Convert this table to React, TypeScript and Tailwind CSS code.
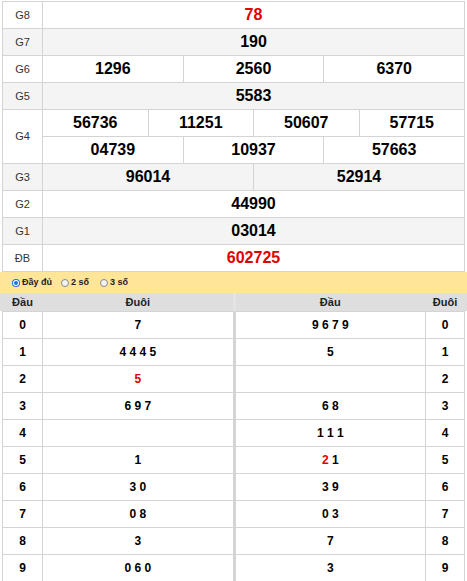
const font = { fontFamily: '"Liberation Sans", Arial, sans-serif' };

type Cell = { v: string; red?: boolean };

const prizes: { label: string; rows: Cell[][] }[] = [
  { label: "G8", rows: [[{ v: "78", red: true }]] },
  { label: "G7", rows: [[{ v: "190" }]] },
  { label: "G6", rows: [[{ v: "1296" }, { v: "2560" }, { v: "6370" }]] },
  { label: "G5", rows: [[{ v: "5583" }]] },
  {
    label: "G4",
    rows: [
      [{ v: "56736" }, { v: "11251" }, { v: "50607" }, { v: "57715" }],
      [{ v: "04739" }, { v: "10937" }, { v: "57663" }],
    ],
  },
  { label: "G3", rows: [[{ v: "96014" }, { v: "52914" }]] },
  { label: "G2", rows: [[{ v: "44990" }]] },
  { label: "G1", rows: [[{ v: "03014" }]] },
  { label: "ĐB", rows: [[{ v: "602725", red: true }]] },
];

// per digit i: tails of head i (left) and heads of tail i (right)
const loto: { dau: Cell[]; duoi: Cell[] }[] = [
  { dau: [{ v: "7" }], duoi: [{ v: "9 6 7 9" }] },
  { dau: [{ v: "4 4 4 5" }], duoi: [{ v: "5" }] },
  { dau: [{ v: "5", red: true }], duoi: [] },
  { dau: [{ v: "6 9 7" }], duoi: [{ v: "6 8" }] },
  { dau: [], duoi: [{ v: "1 1 1" }] },
  { dau: [{ v: "1" }], duoi: [{ v: "2", red: true }, { v: " 1" }] },
  { dau: [{ v: "3 0" }], duoi: [{ v: "3 9" }] },
  { dau: [{ v: "0 8" }], duoi: [{ v: "0 3" }] },
  { dau: [{ v: "3" }], duoi: [{ v: "7" }] },
  { dau: [{ v: "0 6 0" }], duoi: [{ v: "3" }] },
];

function Radio({ checked, className = "" }: { checked?: boolean; className?: string }) {
  return checked ? (
    <span className={`block shrink-0 w-[8px] h-[8px] rounded-full bg-[#1a73e8] p-[1px] ${className}`}>
      <span className="flex w-[6px] h-[6px] rounded-full bg-white items-center justify-center">
        <span className="block w-[4px] h-[4px] rounded-full bg-[#1a73e8]" />
      </span>
    </span>
  ) : (
    <span className={`block shrink-0 w-[8px] h-[8px] rounded-full border border-[#8a8a8a] bg-[#f4f4f4] ${className}`} />
  );
}

function Digits({ cells }: { cells: Cell[] }) {
  return (
    <>
      {cells.map((c, i) => (
        <span key={i} className={`whitespace-pre ${c.red ? "text-[#e00000]" : "text-black"}`}>
          {c.v}
        </span>
      ))}
    </>
  );
}

export default function App() {
  return (
    <div className="w-[467px] h-[581px] overflow-hidden bg-white pt-[1px]" style={font}>
      {/* Prize table */}
      <div className="ml-[2px] w-[463px] border border-[#d4d4d4] divide-y divide-[#d4d4d4]">
        {prizes.map((p, i) => (
          <div key={p.label} className={`flex ${i % 2 === 1 ? "bg-[#f4f4f4]" : "bg-white"}`}>
            <div className="w-[39px] flex items-center justify-center text-[11px] text-[#333]">
              {p.label}
            </div>
            <div className="flex-1 flex flex-col border-l border-[#d4d4d4] divide-y divide-[#d4d4d4]">
              {p.rows.map((r, j) => (
                <div key={j} className="flex divide-x divide-[#d4d4d4]">
                  {r.map((c, k) => (
                    <div
                      key={k}
                      className={`flex-1 h-[26px] flex items-center justify-center text-[16px] font-bold ${
                        c.red ? "text-[#e00000]" : "text-black"
                      }`}
                    >
                      {c.v}
                    </div>
                  ))}
                </div>
              ))}
            </div>
          </div>
        ))}
      </div>

      {/* Mode selector */}
      <div className="h-[21px] bg-[#ffe597] flex items-center pl-[12px] text-[9px] font-bold text-[#222]">
        <Radio checked />
        <span className="ml-[2px]">Đầy đủ</span>
        <Radio className="ml-[9px]" />
        <span className="ml-[2px]">2 số</span>
        <Radio className="ml-[11px]" />
        <span className="ml-[2px]">3 số</span>
      </div>

      {/* Loto header */}
      <div className="h-[18px] bg-[#dedede]">
        <div className="ml-[2px] w-[463px] h-full flex border-x border-transparent text-[11px] font-bold text-[#222]">
          <div className="w-[39px] flex items-center justify-center">Đầu</div>
          <div className="flex-1 flex items-center justify-center border-l border-transparent">Đuôi</div>
          <div className="flex-1 flex items-center justify-center border-l-[3px] border-[#e4e4e4]">Đầu</div>
          <div className="w-[39px] flex items-center justify-center border-l border-transparent">Đuôi</div>
        </div>
      </div>

      {/* Loto rows */}
      <div className="ml-[2px] w-[463px] border border-[#d4d4d4] divide-y divide-[#d4d4d4] text-[12px] font-bold">
        {loto.map((r, i) => (
          <div key={i} className="flex">
            <div className="w-[39px] h-[26px] flex items-center justify-center">{i}</div>
            <div className="flex-1 h-[26px] flex items-center justify-center border-l border-[#d4d4d4]">
              <Digits cells={r.dau} />
            </div>
            <div className="flex-1 h-[26px] flex items-center justify-center border-l-[3px] border-[#d4d4d4]">
              <Digits cells={r.duoi} />
            </div>
            <div className="w-[39px] h-[26px] flex items-center justify-center border-l border-[#d4d4d4]">{i}</div>
          </div>
        ))}
      </div>
    </div>
  );
}
